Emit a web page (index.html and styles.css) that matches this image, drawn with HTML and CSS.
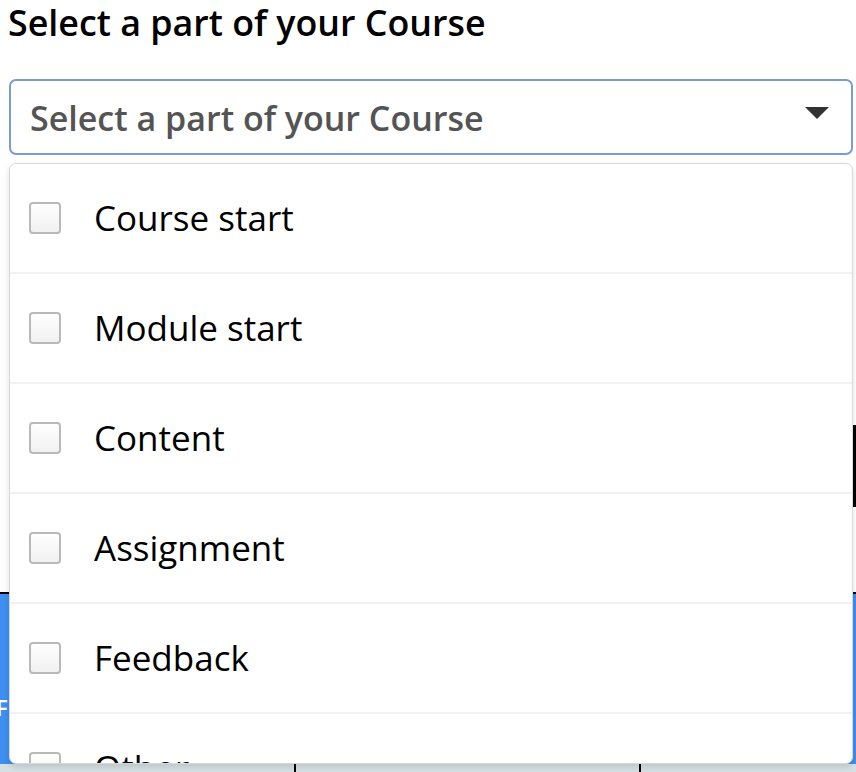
FILE: index.html
```html
<!DOCTYPE html>
<html>
<head>
<meta charset="utf-8">
<link rel="stylesheet" href="styles.css">
</head>
<body>
<div class="page">
  <h1 class="title">Select a part of your Course</h1>
  <div class="select">
    <span class="placeholder">Select a part of your Course</span>
    <span class="caret"></span>
  </div>
  <div class="behind">
    <div class="edge-dark"></div>
    <div class="blue-band"><span class="band-label">F</span></div>
    <div class="footer-strip">
      <span class="tick t1"></span>
      <span class="tick t2"></span>
    </div>
  </div>
  <ul class="menu">
    <li class="option"><span class="box"></span><span class="label">Course start</span></li>
    <li class="option"><span class="box"></span><span class="label">Module start</span></li>
    <li class="option"><span class="box"></span><span class="label">Content</span></li>
    <li class="option"><span class="box"></span><span class="label">Assignment</span></li>
    <li class="option"><span class="box"></span><span class="label">Feedback</span></li>
    <li class="option"><span class="box"></span><span class="label">Other</span></li>
  </ul>
</div>
</body>
</html>
```

FILE: styles.css
```css
html, body {
  margin: 0;
  padding: 0;
  background: #ffffff;
  width: 856px;
  height: 772px;
  overflow: hidden;
}

.page {
  position: relative;
  width: 856px;
  height: 772px;
  font-family: "Open Sans", "Noto Sans", sans-serif;
  color: #000;
}

.title {
  margin: 0;
  padding: 0 0 0 8px;
  height: 79px;
  font-size: 35.8px;
  font-weight: 600;
  line-height: 44px;
}

.select {
  margin: 0 3px 0 9px;
  height: 72px;
  border: 2px solid #7d9bd3;
  border-radius: 7px;
  display: flex;
  align-items: center;
  justify-content: space-between;
  padding: 0 22px 0 19px;
}

.placeholder {
  font-size: 34px;
  font-weight: 600;
  color: #545454;
  line-height: 48px;
  position: relative;
  top: 1px;
}

.caret {
  width: 0;
  height: 0;
  border-left: 12px solid transparent;
  border-right: 12px solid transparent;
  border-top: 12px solid #333;
  position: relative;
  top: -4px;
}

.behind {
  position: relative;
  height: 617px;
}

.edge-dark {
  position: absolute;
  right: 0;
  top: 270px;
  width: 3px;
  height: 82px;
  background: #000;
}

.blue-band {
  position: absolute;
  left: 0;
  right: 0;
  top: 437px;
  height: 171px;
  background: #3e8ff0;
  border-top: 2px solid #000;
  border-bottom: 3px solid #000;
  overflow: hidden;
}

.band-label {
  position: absolute;
  left: -4px;
  top: 98px;
  color: #fff;
  font-size: 22px;
  font-weight: 600;
}

.footer-strip {
  position: absolute;
  left: 0;
  right: 0;
  bottom: 0;
  height: 8px;
  background: #d5e0e4;
}

.tick {
  position: absolute;
  top: 0;
  width: 2px;
  height: 8px;
  background: #000;
}

.t1 { left: 294px; }
.t2 { left: 639px; }

.menu {
  position: absolute;
  left: 9px;
  top: 163px;
  width: 842px;
  height: 599px;
  margin: 0;
  padding: 0;
  list-style: none;
  background: #fff;
  border: 1px solid #d9d9d9;
  border-radius: 7px;
  overflow: hidden;
  box-shadow: 0 3px 6px rgba(0, 0, 0, 0.12);
}

.option {
  height: 108px;
  border-bottom: 2px solid #f1f1f1;
  display: flex;
  align-items: center;
  padding-left: 19px;
}

.box {
  width: 28px;
  height: 28px;
  border: 2px solid #b9b9b9;
  border-radius: 4px;
  background: linear-gradient(#ffffff, #f1f1f1);
  flex: none;
}

.label {
  margin-left: 33px;
  font-size: 35px;
  font-weight: 400;
  color: #000;
  line-height: 48px;
}
```
